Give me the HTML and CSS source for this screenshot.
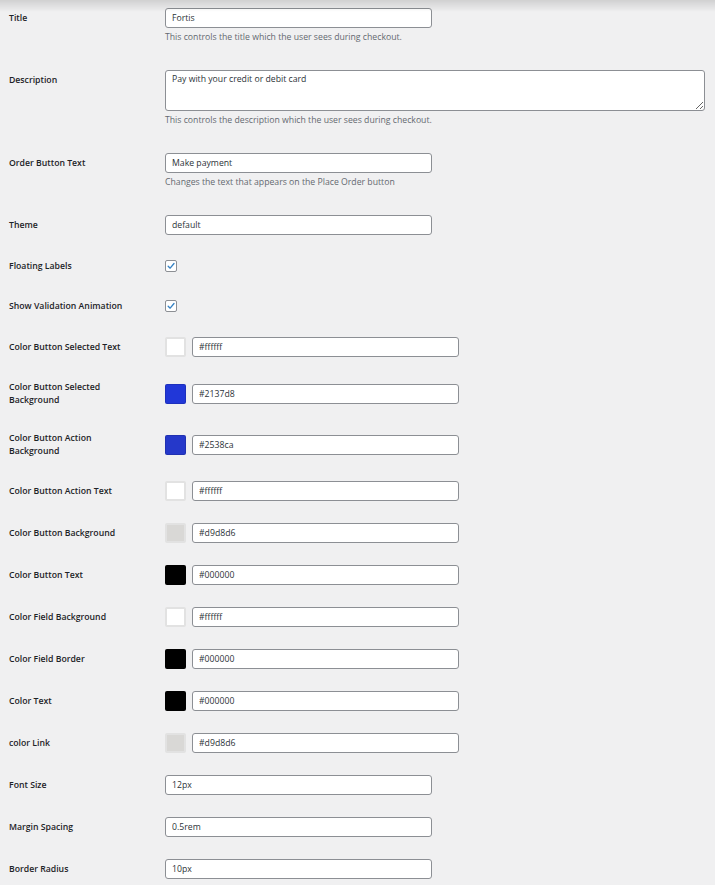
FILE: index.html
```html
<!DOCTYPE html>
<html lang="en">
<head>
<meta charset="utf-8">
<title>Fortis settings</title>
<link rel="stylesheet" href="styles.css">
</head>
<body>
<div class="top-shadow"></div>
<form class="settings">
  <div class="row row-top row-first">
    <div class="label">Title</div>
    <div class="field">
      <input class="text" type="text" value="Fortis">
      <p class="help">This controls the title which the user sees during checkout.</p>
    </div>
  </div>
  <div class="row row-top">
    <div class="label label-desc">Description</div>
    <div class="field">
      <textarea class="area">Pay with your credit or debit card</textarea>
      <p class="help">This controls the description which the user sees during checkout.</p>
    </div>
  </div>
  <div class="row row-top">
    <div class="label">Order Button Text</div>
    <div class="field">
      <input class="text" type="text" value="Make payment">
      <p class="help">Changes the text that appears on the Place Order button</p>
    </div>
  </div>
  <div class="row">
    <div class="label">Theme</div>
    <div class="field"><input class="text" type="text" value="default"></div>
  </div>
  <div class="row row-check">
    <div class="label">Floating Labels</div>
    <div class="field">
      <span class="check"><svg viewBox="0 0 12 12" width="12" height="12"><path d="M2.6 6.2 L5 8.6 L9.6 3" fill="none" stroke="#3582c4" stroke-width="1.6" stroke-linecap="round" stroke-linejoin="round"/></svg></span>
    </div>
  </div>
  <div class="row row-check">
    <div class="label">Show Validation Animation</div>
    <div class="field">
      <span class="check"><svg viewBox="0 0 12 12" width="12" height="12"><path d="M2.6 6.2 L5 8.6 L9.6 3" fill="none" stroke="#3582c4" stroke-width="1.6" stroke-linecap="round" stroke-linejoin="round"/></svg></span>
    </div>
  </div>
  <div class="row">
    <div class="label">Color Button Selected Text</div>
    <div class="field color"><span class="swatch swatch-light" style="background:#ffffff"></span><input class="text" type="text" value="#ffffff"></div>
  </div>
  <div class="row">
    <div class="label">Color Button Selected Background</div>
    <div class="field color"><span class="swatch" style="background:#2137d8"></span><input class="text" type="text" value="#2137d8"></div>
  </div>
  <div class="row">
    <div class="label">Color Button Action Background</div>
    <div class="field color"><span class="swatch" style="background:#2538ca"></span><input class="text" type="text" value="#2538ca"></div>
  </div>
  <div class="row">
    <div class="label">Color Button Action Text</div>
    <div class="field color"><span class="swatch swatch-light" style="background:#ffffff"></span><input class="text" type="text" value="#ffffff"></div>
  </div>
  <div class="row">
    <div class="label">Color Button Background</div>
    <div class="field color"><span class="swatch swatch-light" style="background:#d9d8d6"></span><input class="text" type="text" value="#d9d8d6"></div>
  </div>
  <div class="row">
    <div class="label">Color Button Text</div>
    <div class="field color"><span class="swatch" style="background:#000000"></span><input class="text" type="text" value="#000000"></div>
  </div>
  <div class="row">
    <div class="label">Color Field Background</div>
    <div class="field color"><span class="swatch swatch-light" style="background:#ffffff"></span><input class="text" type="text" value="#ffffff"></div>
  </div>
  <div class="row">
    <div class="label">Color Field Border</div>
    <div class="field color"><span class="swatch" style="background:#000000"></span><input class="text" type="text" value="#000000"></div>
  </div>
  <div class="row">
    <div class="label">Color Text</div>
    <div class="field color"><span class="swatch" style="background:#000000"></span><input class="text" type="text" value="#000000"></div>
  </div>
  <div class="row">
    <div class="label">color Link</div>
    <div class="field color"><span class="swatch swatch-light" style="background:#d9d8d6"></span><input class="text" type="text" value="#d9d8d6"></div>
  </div>
  <div class="row">
    <div class="label">Font Size</div>
    <div class="field"><input class="text" type="text" value="12px"></div>
  </div>
  <div class="row">
    <div class="label">Margin Spacing</div>
    <div class="field"><input class="text" type="text" value="0.5rem"></div>
  </div>
  <div class="row">
    <div class="label">Border Radius</div>
    <div class="field"><input class="text" type="text" value="10px"></div>
  </div>
</form>
</body>
</html>
```
FILE: styles.css
```css
html, body {
  margin: 0;
  padding: 0;
  background: #f0f0f1;
}
body {
  font-family: "Open Sans", "Noto Sans", "Liberation Sans", sans-serif;
  font-size: 8.7px;
  color: #1d2327;
  overflow: hidden;
}
.top-shadow {
  position: fixed;
  top: 0;
  left: 0;
  right: 0;
  height: 12px;
  background: linear-gradient(to bottom, rgba(0,0,0,0.13), rgba(0,0,0,0));
  pointer-events: none;
}
.settings {
  display: flex;
  flex-direction: column;
  margin: 0;
}
.row {
  display: flex;
  align-items: center;
  padding: 11px 0 11px 9px;
}
.row-first {
  padding-top: 8px;
}
.row-top {
  align-items: flex-start;
}
.label {
  width: 156px;
  flex: none;
  font-weight: 600;
  line-height: 13px;
  padding: 1.5px 30px 1.5px 0;
  box-sizing: border-box;
}
.row-top .label {
  padding-top: 3.5px;
}
.field {
  display: flex;
  flex-direction: column;
  align-items: flex-start;
}
.row-check .field {
  height: 18px;
  justify-content: center;
}
.field.color {
  flex-direction: row;
  align-items: center;
  gap: 6px;
}
.text {
  box-sizing: border-box;
  width: 267px;
  height: 20px;
  margin: 0;
  padding: 0 6px;
  border: 1px solid #8c8f94;
  border-radius: 3px;
  background: #fff;
  font-family: inherit;
  font-size: 8.7px;
  color: #2c3338;
  outline: none;
}
.area {
  box-sizing: border-box;
  width: 540px;
  height: 41px;
  margin: 0;
  padding: 2px 6px;
  border: 1px solid #8c8f94;
  border-radius: 3px;
  background: #fff;
  font-family: inherit;
  font-size: 8.7px;
  line-height: 13px;
  color: #2c3338;
  resize: both;
  outline: none;
}
.help {
  margin: 3px 0 4px;
  line-height: 13px;
  color: #646970;
}
.check {
  box-sizing: border-box;
  width: 12px;
  height: 12px;
  border: 1px solid #8c8f94;
  border-radius: 2px;
  background: #fff;
  display: flex;
  align-items: center;
  justify-content: center;
}
.check svg {
  display: block;
  width: 10px;
  height: 10px;
}
.swatch {
  box-sizing: border-box;
  width: 21px;
  height: 20px;
  border: 1px solid rgba(0,0,0,0.12);
  border-radius: 2px;
  flex: none;
}
.swatch-light {
  border: 2px solid #e2e2e2;
}
```
